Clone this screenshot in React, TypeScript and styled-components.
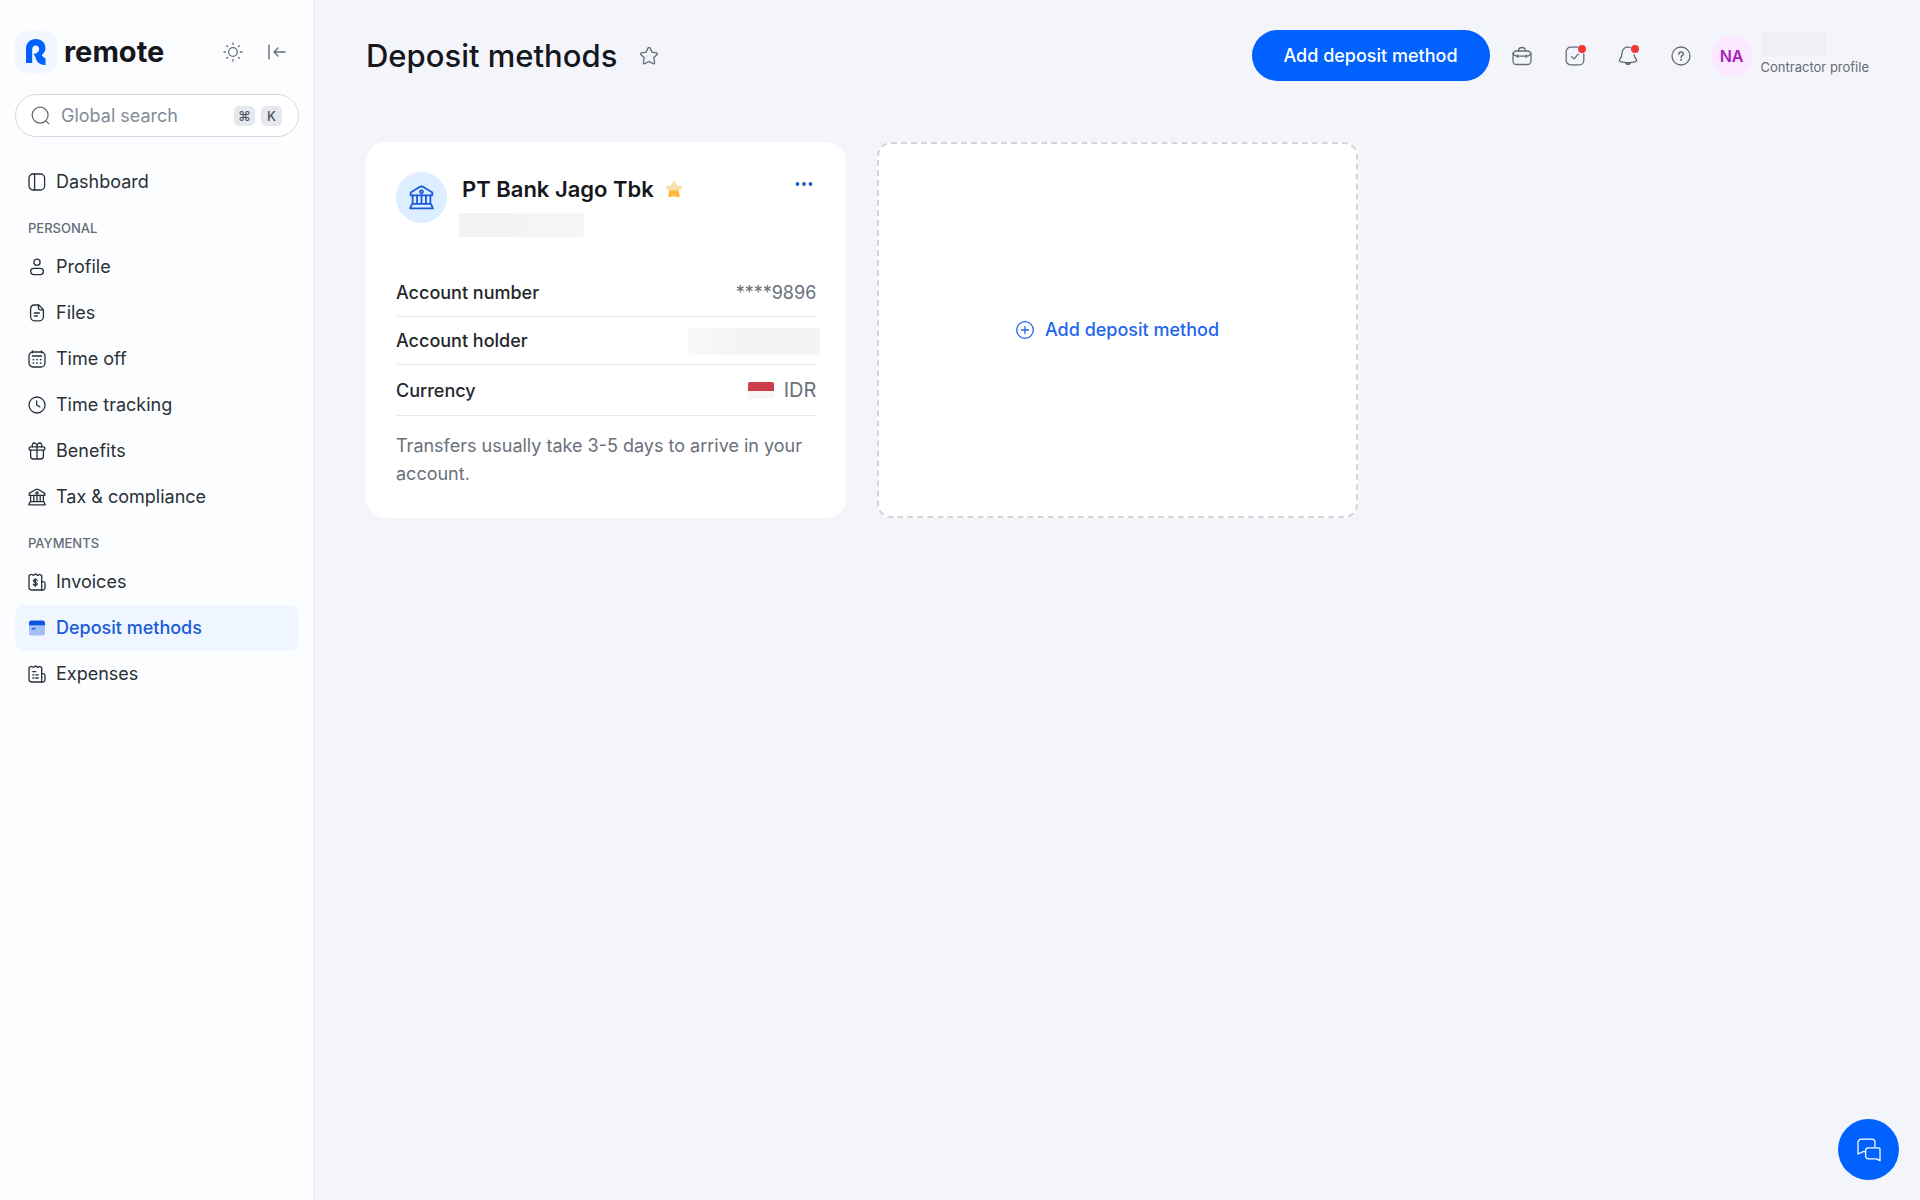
import React from "react";
import styled, { createGlobalStyle, css } from "styled-components";

const GlobalStyle = createGlobalStyle`
  *, *::before, *::after { box-sizing: border-box; }
  body {
    margin: 0;
    background: #f3f5fa;
    color: #2b2f36;
    font-family: Inter, "Liberation Sans", sans-serif;
    font-size: 18px;
    line-height: 28px;
    -webkit-font-smoothing: antialiased;
  }
  button, input { font: inherit; color: inherit; }
  h1, h2, h3, p, ul, dl, dd { margin: 0; padding: 0; }
  ul { list-style: none; }
`;

/* ---------- icons ---------- */

const Glyph = styled.svg<{ $size: number }>`
  display: block;
  flex: none;
  width: ${(p) => p.$size}px;
  height: ${(p) => p.$size}px;
  fill: none;
  stroke: currentColor;
  stroke-width: 1.3;
  stroke-linecap: round;
  stroke-linejoin: round;
`;

type IconProps = { size?: number };
const make = (body: React.ReactNode, box = 18) =>
  function Icon({ size = box }: IconProps) {
    return (
      <Glyph $size={size} viewBox={`0 0 ${box} ${box}`} aria-hidden="true">
        {body}
      </Glyph>
    );
  };

const DashboardIcon = make(
  <>
    <rect x="1" y="1" width="15.6" height="16" rx="4" />
    <path d="M6.6 1v16" />
  </>
);
const ProfileIcon = make(
  <>
    <circle cx="9" cy="4.2" r="3.1" />
    <rect x="2.6" y="10.4" width="12.8" height="6.2" rx="3.1" />
  </>
);
const FilesIcon = make(
  <>
    <path d="M6.4 1h4.4l4.6 4.6v7.2a4 4 0 0 1-4 4H6.6a4 4 0 0 1-4-4V5a4 4 0 0 1 3.8-4z" />
    <path d="M10.4 1v2.8a2 2 0 0 0 2 2h3M6.4 9h5M6.4 12h3" />
  </>
);
const CalendarIcon = make(
  <>
    <rect x="1" y="2" width="16" height="15" rx="4" />
    <path d="M4.6 .8v2M13.4 .8v2M4.4 6h9.2" />
    <path d="M5.4 9.6h.1M9 9.6h.1M12.6 9.6h.1M5.4 13h.1M9 13h.1M12.6 13h.1" strokeWidth="1.7" />
  </>
);
const ClockIcon = make(
  <>
    <circle cx="9" cy="9" r="8" />
    <path d="M8.6 5v3.4a1 1 0 0 0 .5.9l2.7 1.6" />
  </>
);
const GiftIcon = make(
  <>
    <rect x="1" y="4.8" width="16" height="3.4" rx="1.7" />
    <path d="M2.6 8.2v6a2.8 2.8 0 0 0 2.8 2.8h7.2a2.8 2.8 0 0 0 2.8-2.8v-6M9 4.8V17" />
    <path d="M9 4.8C9 2.6 7.800 1 6.200 1S4 2.400 4.400 4.800M9 4.800C9 2.600 10.200 1 11.800 1s2.200 1.400 1.800 3.800" />
  </>
);
const BankIcon = make(
  <>
    <path d="M1.200 5.400 7.600 1.500a2.700 2.700 0 0 1 2.800 0l6.400 3.900v2H1.200z" />
    <circle cx="9" cy="4.900" r="1.100" />
    <path d="M2.600 7.400v6M5.800 7.400v6M9 7.400v6M12.200 7.400v6M15.400 7.400v6M2.200 13.600h13.600l1.400 3.200H.8z" />
  </>
);
const bill = (
  <>
    <path d="M1 2.400c1.200 0 1.600-1 2.400-1s1.200.9 2 .9 1.300-1.300 2.200-1.300 1.300 1.300 2.100 1.300 1.300-.9 2.100-.9 1.200 1 1.900 1V17H3.400A2.400 2.400 0 0 1 1 14.600z" />
    <path d="M13.700 8.600h1.500A1.900 1.900 0 0 1 17 10.500v4.300a2.100 2.100 0 0 1-2.100 2.200h-1.400" />
  </>
);
const InvoiceIcon = make(
  <>
    {bill}
    <path d="M9.100 7.600c-.3-.7-1-1-1.800-1-1 0-1.800.5-1.800 1.400 0 2 3.700.9 3.700 2.900 0 .9-.8 1.400-1.900 1.400-.9 0-1.600-.3-1.900-1.100M7.300 5.600v7.700" />
  </>
);
const ExpenseIcon = make(
  <>
    {bill}
    <path d="M4.800 6.700h3M4.800 9.900h1.100M7.800 9.900h2.400M4.800 13h1.100M7.800 13h2.400" />
  </>
);
const CardIcon = make(
  <g stroke="none">
    <path d="M1 6h16v8a2.500 2.500 0 0 1-2.500 2.500h-11A2.500 2.500 0 0 1 1 14z" fill="#a5bff5" />
    <path d="M3.500 1.500h11A2.500 2.500 0 0 1 17 4v2.200H1V4a2.500 2.500 0 0 1 2.500-2.500z" fill="#0a55e0" />
    <rect x="3.600" y="9" width="4" height="1.600" rx=".8" fill="#1a5fe2" />
  </g>
);
const SunIcon = make(
  <>
    <circle cx="10" cy="10" r="4.300" />
    <path d="M10 1v1.600M10 17.400V19M1 10h1.600M17.400 10H19M3.700 3.700l.9.9M15.400 15.400l.9.900M3.700 16.300l.9-.9M15.400 4.600l.9-.9" />
  </>,
  20
);
const CollapseIcon = make(<path d="M2 3v14M18 10H7M11 6l-4 4 4 4" strokeWidth="1.400" />, 20);
const SearchIcon = make(
  <>
    <circle cx="9.600" cy="9.600" r="8.400" />
    <path d="m15.600 15.600 3.200 3.200" />
  </>,
  20
);
const StarIcon = make(
  <path d="M9.100 1.900a1 1 0 0 1 1.800 0l2 4.200 4.700.7a1 1 0 0 1 .5 1.700l-3.300 3.300.8 4.900a1 1 0 0 1-1.400 1L10 15.500l-4.200 2.200a1 1 0 0 1-1.400-1l.8-4.900-3.300-3.300a1 1 0 0 1 .5-1.700l4.700-.7z" />,
  20
);
const BriefcaseIcon = make(
  <>
    <rect x="1" y="5" width="18" height="13.500" rx="3.500" />
    <path d="M6.500 5C6.500 2.800 8 1.500 10 1.500S13.500 2.800 13.500 5M1 7.200c1 2 2.600 3 4.600 3h8.800c2 0 3.600-1 4.600-3M5.800 8.800v2.600M14.200 8.800v2.600" />
  </>,
  20
);
const TaskIcon = make(
  <>
    <path d="M12.500 1.200H5.600A4.400 4.400 0 0 0 1.200 5.600v8.800a4.400 4.400 0 0 0 4.400 4.400h8.800a4.400 4.400 0 0 0 4.400-4.400V8" />
    <path d="m6.600 10.600 2.400 2.300 4.200-4.800" />
  </>,
  20
);
const BellIcon = make(
  <>
    <path d="M12 1.400C7.400.3 4 3 4 7.200c0 3.600-.9 4.600-2.300 6.300-.6.900-.3 1.800.8 2.100 4.900 1.300 10.100 1.300 15 0 1.100-.3 1.400-1.200.8-2.100-1.200-1.500-2-2.500-2.200-4.900" />
    <path d="M7.300 16.600c.5 1.400 1.400 2 2.700 2s2.200-.6 2.700-2z" fill="currentColor" />
  </>,
  20
);
const HelpIcon = make(
  <>
    <circle cx="10" cy="10" r="9" />
    <path d="M7.900 8.200c0-1.300.9-2.200 2.200-2.200s2.200.8 2.200 2c0 1.700-2.200 1.700-2.200 3.400" strokeWidth="1.500" />
    <path d="M10.100 13.800v.1" strokeWidth="1.900" />
  </>,
  20
);
const PlusCircleIcon = make(
  <>
    <circle cx="9" cy="9" r="8.300" />
    <path d="M9 5.400v7.200M5.400 9h7.200" />
  </>
);
const MoreIcon = make(
  <g fill="currentColor" stroke="none">
    <circle cx="2.500" cy="9" r="1.900" />
    <circle cx="9" cy="9" r="1.900" />
    <circle cx="15.500" cy="9" r="1.900" />
  </g>
);
const ChatIcon = make(
  <>
    <path d="M8.400 13.600H6.200L1 16V4.600A3.300 3.300 0 0 1 4.300 1.200h10.400A3.300 3.300 0 0 1 18 4.500v4" />
    <path d="M11.400 9.800h10.200a1.400 1.400 0 0 1 1.400 1.400v11.500l-3.600-1.800h-8a2.800 2.800 0 0 1-2.800-2.800v-5.500a2.800 2.800 0 0 1 2.800-2.800z" />
  </>,
  24
);

const FavouriteMark = () => (
  <Glyph $size={18} viewBox="0 0 18 18" role="img" aria-label="Preferred">
    <path
      stroke="none"
      fill="#fbdcab"
      d="M8.100 1.600a1 1 0 0 1 1.800 0l1.900 4 4.600.6a1 1 0 0 1 .6 1.700L13.700 11l.8 5a1 1 0 0 1-1.400 1H4.900a1 1 0 0 1-1.400-1l.8-5L1 7.900a1 1 0 0 1 .6-1.700l4.600-.6z"
    />
    <path stroke="none" fill="#fdb83a" d="M4.300 10.600h9.400l.9 5.400a1 1 0 0 1-1.500 1L9 15.600 4.900 17a1 1 0 0 1-1.500-1z" />
  </Glyph>
);

const LogoMark = () => (
  <svg width="20" height="26" viewBox="0 0 20 26" aria-hidden="true">
    <path
      fill="#0061ff"
      d="M0 24V9.600C0 4 4.200 0 9.800 0 15.500 0 19.400 3.800 19.400 8.900c0 3-1.300 5.400-3.600 6.900 1.100 2.200 2 3.200 3.700 3.400V26c-5.600.2-9-2.600-10.300-8.400L7.600 15c3.700-.4 5.600-2.200 5.600-5.200 0-2-1.400-3.400-3.500-3.400S6.200 7.900 6.200 10v14z"
    />
  </svg>
);

const Flag = () => (
  <svg width="26" height="17" viewBox="0 0 26 17" role="img" aria-label="Indonesia">
    <rect width="26" height="17" rx="2" fill="#f6f6f7" />
    <path d="M2 0h22a2 2 0 0 1 2 2v7H0V2a2 2 0 0 1 2-2z" fill="#cb3f4b" />
  </svg>
);

/* ---------- layout ---------- */

const Shell = styled.div`
  display: grid;
  grid-template-columns: 315px minmax(0, 1fr);
  min-height: 100vh;
`;

const Sidebar = styled.aside`
  padding: 31px 14px 24px 15px;
  border-right: 2px solid #eef0f5;
  background: #fbfdff;
`;

const Brand = styled.div`
  display: flex;
  align-items: center;
  height: 42px;
`;

const LogoTile = styled.span`
  display: grid;
  place-items: center;
  width: 42px;
  height: 42px;
  border-radius: 12px;
  background: #f1f6ff;
`;

const Wordmark = styled.span`
  flex: 1;
  margin-left: 7px;
  color: #14171c;
  font-size: 29px;
  font-weight: 700;
`;

const IconButton = styled.button`
  position: relative;
  display: grid;
  place-items: center;
  width: 24px;
  height: 24px;
  padding: 0;
  border: 0;
  background: none;
  color: #666b76;
  cursor: pointer;
`;

const BrandTools = styled.div`
  display: flex;
  gap: 20px;
  margin-right: 10px;
`;

const Search = styled.label`
  display: flex;
  align-items: center;
  gap: 11px;
  height: 43px;
  margin-top: 21px;
  padding: 0 16px 0 15px;
  border: 1px solid #d5d8de;
  border-radius: 22px;
  background: #fff;
  color: #666b76;
`;

const SearchInput = styled.input`
  flex: 1;
  min-width: 0;
  padding: 0;
  border: 0;
  outline: 0;
  background: none;
  &::placeholder {
    color: #858b98;
    opacity: 1;
  }
`;

const Keys = styled.span`
  display: flex;
  gap: 6px;
`;

const Key = styled.kbd`
  width: 21px;
  border-radius: 5px;
  background: #e5e8ee;
  color: #4d535e;
  font: 500 13px/20px Inter, "DejaVu Sans", sans-serif;
  text-align: center;
`;

const Nav = styled.nav`
  margin-top: 22px;
`;

const NavHeading = styled.h2`
  padding: 13px 13px 6px;
  color: #666b76;
  font-size: 13px;
  font-weight: 500;
  line-height: 20px;
`;

const NavLink = styled.a<{ $active?: boolean }>`
  display: flex;
  align-items: center;
  gap: 10px;
  height: 46px;
  padding: 0 13px;
  border-radius: 10px;
  color: #2b2f36;
  text-decoration: none;
  ${(p) =>
    p.$active &&
    css`
      background: #eff6ff;
      color: #1a5bd8;
      font-weight: 500;
    `}
`;

const Main = styled.main`
  padding: 30px 51px;
`;

const TopBar = styled.header`
  display: flex;
  align-items: center;
  height: 51px;
`;

const PageTitle = styled.h1`
  margin-right: 20px;
  color: #14171c;
  font-size: 31px;
  font-weight: 500;
  line-height: 40px;
`;

const Actions = styled.div`
  display: flex;
  align-items: center;
  margin-left: auto;
`;

const PrimaryButton = styled.button`
  height: 51px;
  padding: 0 32px;
  border: 0;
  border-radius: 26px;
  background: #0061ff;
  color: #fff;
  font-weight: 500;
  cursor: pointer;
`;

const ActionIcons = styled.div`
  display: flex;
  gap: 29px;
  margin: 0 18px 0 20px;
`;

const AlertDot = styled.span`
  position: absolute;
  top: 1px;
  right: 1px;
  width: 8px;
  height: 8px;
  border-radius: 50%;
  background: #f03838;
`;

const Profile = styled.div`
  display: flex;
  align-items: center;
  gap: 8px;
`;

const Avatar = styled.span`
  display: grid;
  place-items: center;
  width: 42px;
  height: 42px;
  border-radius: 50%;
  background: #fbe8ff;
  color: #a521b8;
  font-size: 16px;
  font-weight: 600;
`;

const ProfileText = styled.div`
  display: flex;
  flex-direction: column;
  padding-bottom: 4px;
  color: #666b76;
  font-size: 13px;
  line-height: 20px;
`;

const Masked = styled.span<{ $width: number; $height: number }>`
  display: block;
  width: ${(p) => p.$width}px;
  height: ${(p) => p.$height}px;
  background: linear-gradient(90deg, #f1f2f3, #f6f6f6);
`;

const MaskedName = styled(Masked)`
  background: #f0f0f4;
`;

const Cards = styled.section`
  display: grid;
  grid-template-columns: repeat(3, minmax(0, 1fr));
  gap: 31px;
  margin-top: 61px;
`;

const Card = styled.article`
  padding: 30px;
  border-radius: 20px;
  background: #fff;
`;

const CardHead = styled.div`
  display: flex;
  align-items: flex-start;
  height: 97px;
`;

const BankBadge = styled.span`
  display: grid;
  place-items: center;
  width: 51px;
  height: 51px;
  border-radius: 50%;
  background: #dceeff;
  color: #1a5bd8;
`;

const BankInfo = styled.div`
  flex: 1;
  margin-left: 12px;
`;

const BankName = styled.h3`
  display: flex;
  align-items: center;
  gap: 11px;
  margin: 3px 0 10px 3px;
  color: #14171c;
  font-size: 22px;
  font-weight: 600;
  line-height: 28px;
`;

const MoreButton = styled(IconButton)`
  color: #1a5bd8;
`;

const Details = styled.dl`
  margin-bottom: 16px;
`;

const Detail = styled.div`
  display: flex;
  align-items: center;
  justify-content: space-between;
  padding: 10px 0 9px;
  border-bottom: 1px solid #e8eaee;
`;

const Term = styled.dt`
  color: #24272d;
  font-weight: 500;
`;

const Value = styled.dd`
  display: flex;
  align-items: center;
  gap: 10px;
  color: #6a707c;
`;

const CurrencyCode = styled.span`
  font-size: 20px;
  line-height: 31px;
`;

const MaskedHolder = styled(Masked)`
  margin-right: -4px;
  background: linear-gradient(90deg, #f9f9f9, #f4f4f5 40%);
`;

const Note = styled.p`
  color: #6a707c;
`;

const AddCard = styled.button`
  display: flex;
  align-items: center;
  justify-content: center;
  gap: 11px;
  border: 2px dashed #d2d5da;
  border-radius: 14px;
  background: #fff;
  color: #1f66ee;
  font-weight: 500;
  cursor: pointer;
`;

const ChatButton = styled.button`
  position: fixed;
  right: 21px;
  bottom: 20px;
  display: grid;
  place-items: center;
  width: 61px;
  height: 61px;
  padding: 0;
  border: 0;
  border-radius: 50%;
  background: #0061ff;
  color: #fff;
  cursor: pointer;
`;

/* ---------- content ---------- */

type NavEntry = { label: string; icon: React.ComponentType<IconProps>; active?: boolean };

const groups: { heading?: string; items: NavEntry[] }[] = [
  { items: [{ label: "Dashboard", icon: DashboardIcon }] },
  {
    heading: "PERSONAL",
    items: [
      { label: "Profile", icon: ProfileIcon },
      { label: "Files", icon: FilesIcon },
      { label: "Time off", icon: CalendarIcon },
      { label: "Time tracking", icon: ClockIcon },
      { label: "Benefits", icon: GiftIcon },
      { label: "Tax & compliance", icon: BankIcon },
    ],
  },
  {
    heading: "PAYMENTS",
    items: [
      { label: "Invoices", icon: InvoiceIcon },
      { label: "Deposit methods", icon: CardIcon, active: true },
      { label: "Expenses", icon: ExpenseIcon },
    ],
  },
];

const topIcons = [
  { label: "Work", icon: BriefcaseIcon, alert: false },
  { label: "Tasks", icon: TaskIcon, alert: true },
  { label: "Notifications", icon: BellIcon, alert: true },
  { label: "Help", icon: HelpIcon, alert: false },
];

export default function App() {
  return (
    <>
      <GlobalStyle />
      <Shell>
        <Sidebar>
          <Brand>
            <LogoTile>
              <LogoMark />
            </LogoTile>
            <Wordmark>remote</Wordmark>
            <BrandTools>
              <IconButton aria-label="Theme">
                <SunIcon />
              </IconButton>
              <IconButton aria-label="Collapse sidebar">
                <CollapseIcon />
              </IconButton>
            </BrandTools>
          </Brand>
          <Search>
            <SearchIcon size={19} />
            <SearchInput type="text" placeholder="Global search" aria-label="Global search" />
            <Keys>
              <Key>⌘</Key>
              <Key>K</Key>
            </Keys>
          </Search>
          <Nav>
            {groups.map((group, i) => (
              <React.Fragment key={i}>
                {group.heading && <NavHeading>{group.heading}</NavHeading>}
                <ul>
                  {group.items.map(({ label, icon: Icon, active }) => (
                    <li key={label}>
                      <NavLink href="#" $active={active} aria-current={active ? "page" : undefined}>
                        <Icon />
                        {label}
                      </NavLink>
                    </li>
                  ))}
                </ul>
              </React.Fragment>
            ))}
          </Nav>
        </Sidebar>
        <Main>
          <TopBar>
            <PageTitle>Deposit methods</PageTitle>
            <IconButton aria-label="Add to favourites">
              <StarIcon />
            </IconButton>
            <Actions>
              <PrimaryButton>Add deposit method</PrimaryButton>
              <ActionIcons>
                {topIcons.map(({ label, icon: Icon, alert }) => (
                  <IconButton key={label} aria-label={label}>
                    <Icon />
                    {alert && <AlertDot />}
                  </IconButton>
                ))}
              </ActionIcons>
              <Profile>
                <Avatar>NA</Avatar>
                <ProfileText>
                  <MaskedName $width={65} $height={26} />
                  <span>Contractor profile</span>
                </ProfileText>
              </Profile>
            </Actions>
          </TopBar>
          <Cards>
            <Card>
              <CardHead>
                <BankBadge>
                  <BankIcon size={25} />
                </BankBadge>
                <BankInfo>
                  <BankName>
                    PT Bank Jago Tbk
                    <FavouriteMark />
                  </BankName>
                  <Masked $width={125} $height={24} />
                </BankInfo>
                <MoreButton aria-label="More options">
                  <MoreIcon />
                </MoreButton>
              </CardHead>
              <Details>
                <Detail>
                  <Term>Account number</Term>
                  <Value>****9896</Value>
                </Detail>
                <Detail>
                  <Term>Account holder</Term>
                  <Value>
                    <MaskedHolder $width={132} $height={27} />
                  </Value>
                </Detail>
                <Detail>
                  <Term>Currency</Term>
                  <Value>
                    <Flag />
                    <CurrencyCode>IDR</CurrencyCode>
                  </Value>
                </Detail>
              </Details>
              <Note>Transfers usually take 3-5 days to arrive in your account.</Note>
            </Card>
            <AddCard>
              <PlusCircleIcon />
              Add deposit method
            </AddCard>
          </Cards>
        </Main>
      </Shell>
      <ChatButton aria-label="Open chat">
        <ChatIcon />
      </ChatButton>
    </>
  );
}
